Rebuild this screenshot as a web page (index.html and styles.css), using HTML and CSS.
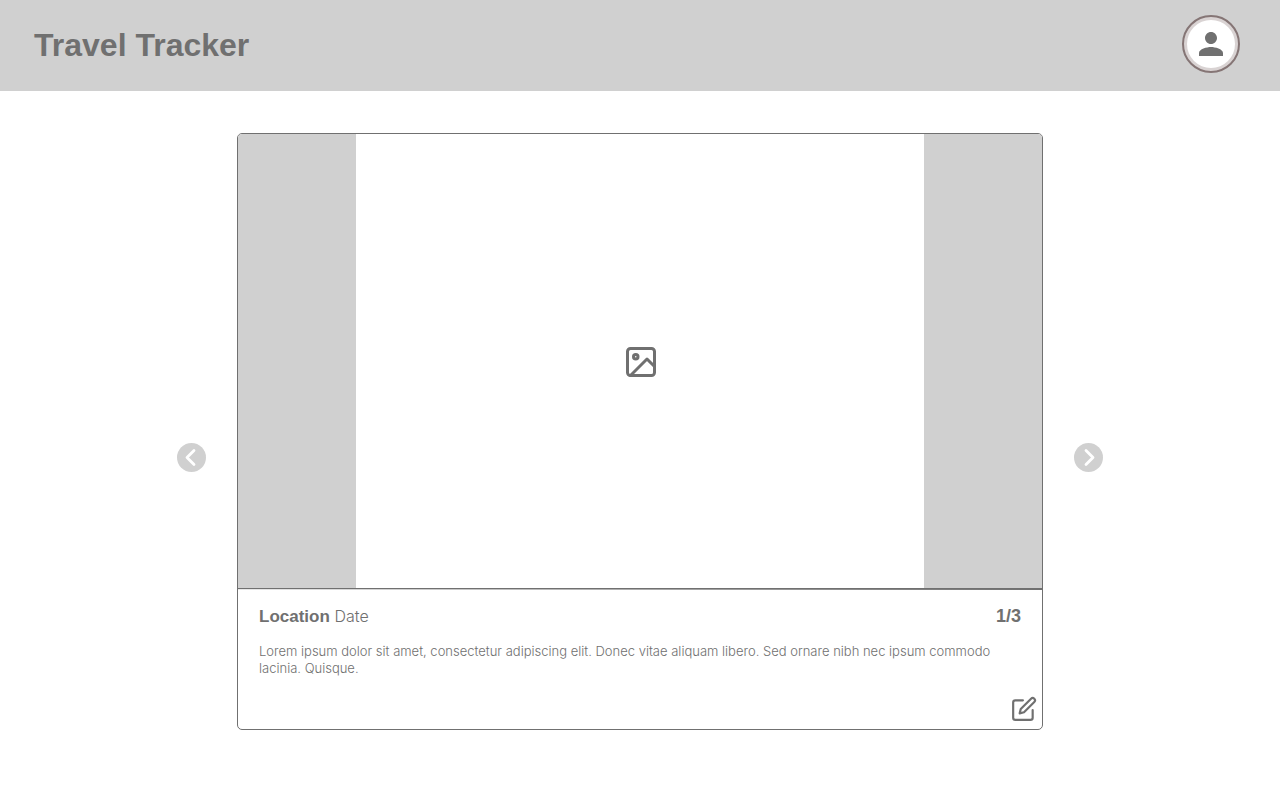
FILE: index.html
```html
<!DOCTYPE html>
<html lang="en">
<head>
<meta charset="utf-8">
<meta name="viewport" content="width=device-width, initial-scale=1">
<title>Travel Tracker</title>
<link rel="stylesheet" href="styles.css">
</head>
<body>
<header class="topbar">
  <h1 class="brand">Travel Tracker</h1>
  <button class="avatar" type="button" aria-label="Account">
    <span class="avatar-face">
      <svg width="36" height="36" viewBox="0 0 24 24" fill="currentColor" aria-hidden="true"><path d="M12 12c2.210 0 4-1.790 4-4s-1.790-4-4-4-4 1.790-4 4 1.790 4 4 4zm0 2c-2.670 0-8 1.340-8 4v2h16v-2c0-2.660-5.330-4-8-4z"/></svg>
    </span>
  </button>
</header>
<main class="carousel">
  <button class="arrow" type="button" aria-label="Previous">
    <svg width="29" height="29" viewBox="0 0 29 29" fill="none" aria-hidden="true"><circle cx="14.500" cy="14.500" r="14.500" fill="#d0d0d0"/><path d="M17 7.500l-7 7 7 7" stroke="#fff" stroke-width="2.800" stroke-linecap="round" stroke-linejoin="round"/></svg>
  </button>
  <article class="card">
    <div class="media">
      <div class="photo">
        <svg class="line-icon" width="36" height="36" viewBox="0 0 24 24" role="img" aria-label="Photo"><rect x="3" y="3" width="18" height="18" rx="2"/><circle cx="8.500" cy="8.500" r="1.500"/><path d="M21 15l-5-5L5 21"/></svg>
      </div>
    </div>
    <hr class="divider">
    <div class="details">
      <div class="heading">
        <h2 class="place">Location <span class="date">Date</span></h2>
        <span class="count">1/3</span>
      </div>
      <p class="note">Lorem ipsum dolor sit amet, consectetur adipiscing elit. Donec vitae aliquam libero. Sed ornare nibh nec ipsum commodo lacinia. Quisque.</p>
    </div>
    <div class="actions">
      <button class="edit" type="button" aria-label="Edit">
        <svg class="line-icon" width="26" height="26" viewBox="0 0 24 24" aria-hidden="true"><path d="M11 4H4a2 2 0 0 0-2 2v14a2 2 0 0 0 2 2h14a2 2 0 0 0 2-2v-7"/><path d="M18.500 2.500a2.121 2.121 0 0 1 3 3L12 15l-4 1 1-4 9.500-9.500z"/></svg>
      </button>
    </div>
  </article>
  <button class="arrow" type="button" aria-label="Next">
    <svg width="29" height="29" viewBox="0 0 29 29" fill="none" aria-hidden="true"><circle cx="14.500" cy="14.500" r="14.500" fill="#d0d0d0"/><path d="M12 7.500l7 7-7 7" stroke="#fff" stroke-width="2.800" stroke-linecap="round" stroke-linejoin="round"/></svg>
  </button>
</main>
</body>
</html>
```

FILE: styles.css
```css
* {
  box-sizing: border-box;
}

body {
  margin: 0;
  background: #fff;
  color: #707070;
  font-family: "Liberation Sans", Arial, sans-serif;
}

button {
  padding: 0;
  border: 0;
  background: none;
  color: inherit;
  cursor: pointer;
}

svg {
  display: block;
}

.line-icon {
  fill: none;
  stroke: #707070;
  stroke-width: 2;
  stroke-linecap: round;
  stroke-linejoin: round;
}

.topbar {
  display: flex;
  align-items: center;
  justify-content: space-between;
  padding: 15px 40px 18px 34px;
  background: #d0d0d0;
}

.brand {
  margin: 0;
  padding-top: 2px;
  font-size: 32px;
  line-height: 40px;
}

.avatar {
  padding: 3px;
  border: 2px solid #857575;
  border-radius: 50%;
  background: #d9d3d3;
}

.avatar-face {
  display: grid;
  place-items: center;
  width: 48px;
  height: 48px;
  border-radius: 50%;
  background: #fff;
}

.carousel {
  display: flex;
  align-items: center;
  justify-content: center;
  gap: 31px;
  padding: 42px 20px;
}

.arrow {
  flex: none;
  margin-top: 52px;
}

.card {
  flex: 0 1 806px;
  border: 1px solid #707070;
  border-radius: 5px;
}

.media {
  display: flex;
  justify-content: center;
  padding: 0 118px;
  border-radius: 4px 4px 0 0;
  background: #d0d0d0;
}

.photo {
  flex: 1;
  display: grid;
  place-items: center;
  aspect-ratio: 5 / 4;
  padding: 2px 0 0 1px;
  background: #fff;
}

.divider {
  height: 2px;
  margin: 0;
  border: 0;
  background:
    linear-gradient(#707070, #707070) top / 100% 1px no-repeat,
    linear-gradient(to right, #e8e8e8, #707070) bottom / 100% 1px no-repeat;
}

.details {
  padding: 16px 21px 0;
}

.heading {
  display: flex;
  align-items: baseline;
  justify-content: space-between;
}

.place {
  margin: 0;
  font-size: 17px;
  line-height: 20px;
}

.date {
  font-family: Inter, "Liberation Sans", sans-serif;
  font-size: 16px;
  font-weight: 300;
}

.count {
  font-size: 18px;
  font-weight: 700;
  line-height: 20px;
}

.note {
  margin: 16px 0 0;
  font-family: Inter, "Liberation Sans", sans-serif;
  font-size: 13px;
  font-weight: 300;
  line-height: 17px;
}

.actions {
  display: flex;
  justify-content: flex-end;
  padding: 19px 5px 7px;
}
```
